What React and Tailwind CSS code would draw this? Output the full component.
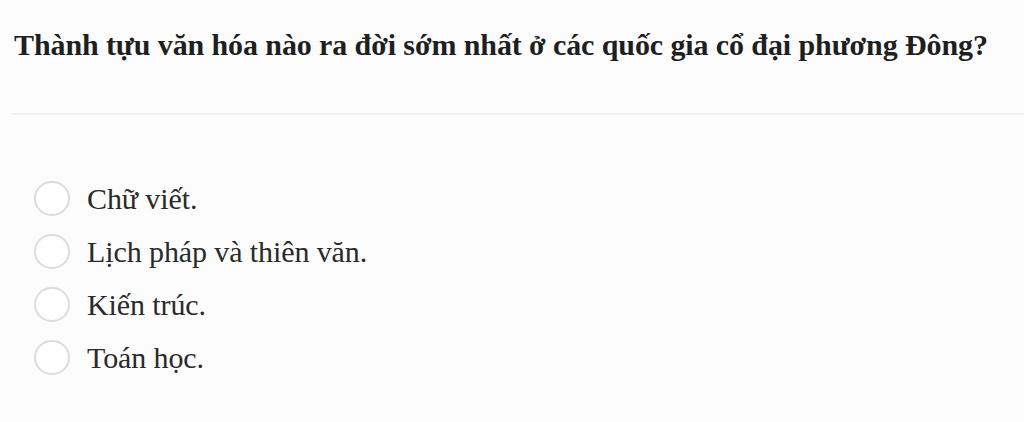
import React from 'react';

const options = ['Chữ viết.', 'Lịch pháp và thiên văn.', 'Kiến trúc.', 'Toán học.'];

const App = () => {
  return (
    <div className="w-[1024px] h-[422px] bg-[#fcfcfc] overflow-hidden" style={{ fontFamily: '"Liberation Serif", "Times New Roman", serif' }}>
      {/* Question */}
      <div className="pl-[14px] pt-[25px] pb-[48px]">
        <h2 className="text-[30px] leading-[40px] font-bold text-[#1f1f1f] tracking-[-0.1px] whitespace-nowrap">
          Thành tựu văn hóa nào ra đời sớm nhất ở các quốc gia cổ đại phương Đông?
        </h2>
      </div>
      <div className="ml-[12px] border-t-2 border-[#f0f0f0]"></div>

      {/* Answers */}
      <div className="pl-[34px] pt-[66px] flex flex-col gap-[18px]">
        {options.map((opt) => (
          <label key={opt} className="flex items-center gap-[17px] h-[35px]">
            <span className="w-[36px] h-[35px] rounded-full border-2 border-[#dcdcdc] bg-white shrink-0"></span>
            <span className="text-[30px] leading-[35px] text-[#2a2a2a] tracking-[-0.1px]">{opt}</span>
          </label>
        ))}
      </div>
    </div>
  );
};

export default App;
